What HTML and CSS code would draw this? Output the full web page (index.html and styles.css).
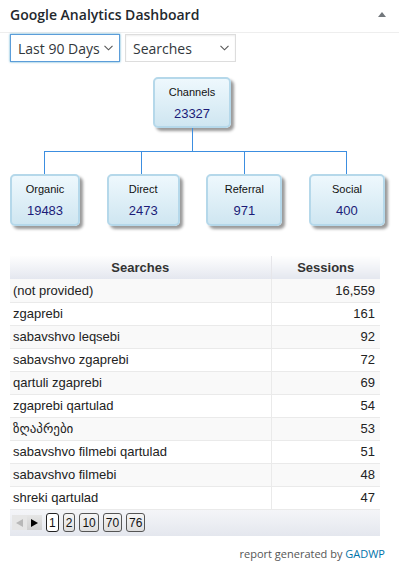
FILE: index.html
```html
<!DOCTYPE html>
<html lang="en">
<head>
<meta charset="UTF-8" />
<title>Google Analytics Dashboard</title>
<link rel="stylesheet" href="styles.css">
</head>
<body>
<div class="widget">
<div class="widget-head">
<h2>Google Analytics Dashboard</h2>
<span class="toggle"></span>
</div>

<div class="controls">
<div class="select select-focus">
<span>Last 90 Days</span>
<svg width="9" height="6" viewBox="0 0 9 6"><path d="M0.5 0.8 L4.5 4.8 L8.5 0.8" fill="none" stroke="#555" stroke-width="1.1"/></svg>
</div>
<div class="select select-wide">
<span>Searches</span>
<svg width="9" height="6" viewBox="0 0 9 6"><path d="M0.5 0.8 L4.5 4.8 L8.5 0.8" fill="none" stroke="#555" stroke-width="1.1"/></svg>
</div>
</div>

<div class="orgchart">
<div class="org-top">
<div class="org-node node-parent">
<span class="node-label">Channels</span>
<span class="node-value">23327</span>
</div>
</div>
<svg class="org-lines" width="375" height="46" viewBox="0 0 375 46">
<g stroke="#3c8ee0" stroke-width="1" fill="none">
<path d="M182.5 0 V23.5"/>
<path d="M34 23.5 H337"/>
<path d="M34.5 23 V46"/>
<path d="M131.5 23 V46"/>
<path d="M234.5 23 V46"/>
<path d="M336.5 23 V46"/>
</g>
</svg>
<div class="org-children">
<div class="org-node">
<span class="node-label">Organic</span>
<span class="node-value">19483</span>
</div>
<div class="org-node">
<span class="node-label">Direct</span>
<span class="node-value">2473</span>
</div>
<div class="org-node">
<span class="node-label">Referral</span>
<span class="node-value">971</span>
</div>
<div class="org-node">
<span class="node-label">Social</span>
<span class="node-value">400</span>
</div>
</div>
</div>

<div class="gtable">
<table>
<thead>
<tr><th class="col-name">Searches</th><th class="col-num">Sessions</th></tr>
</thead>
<tbody>
<tr class="odd"><td>(not provided)</td><td class="num">16,559</td></tr>
<tr><td>zgaprebi</td><td class="num">161</td></tr>
<tr class="odd"><td>sabavshvo leqsebi</td><td class="num">92</td></tr>
<tr><td>sabavshvo zgaprebi</td><td class="num">72</td></tr>
<tr class="odd"><td>qartuli zgaprebi</td><td class="num">69</td></tr>
<tr><td>zgaprebi qartulad</td><td class="num">54</td></tr>
<tr class="odd"><td>ზღაპრები</td><td class="num">53</td></tr>
<tr><td>sabavshvo filmebi qartulad</td><td class="num">51</td></tr>
<tr class="odd"><td>sabavshvo filmebi</td><td class="num">48</td></tr>
<tr><td>shreki qartulad</td><td class="num">47</td></tr>
</tbody>
</table>
<div class="pager">
<span class="pg-arrow disabled"><svg width="7" height="8" viewBox="0 0 7 8"><path d="M7 0 V8 L0 4 Z" fill="#b8b8b8"/></svg></span>
<span class="pg-arrow"><svg width="7" height="8" viewBox="0 0 7 8"><path d="M0 0 V8 L7 4 Z" fill="#000"/></svg></span>
<span class="pg-btn current">1</span>
<span class="pg-btn">2</span>
<span class="pg-btn">10</span>
<span class="pg-btn">70</span>
<span class="pg-btn">76</span>
</div>
</div>

<div class="footer">report generated by <a href="#">GADWP</a></div>
</div>
</body>
</html>
```

FILE: styles.css
```css
* {
box-sizing: border-box;
margin: 0;
padding: 0;
}

body {
width: 399px;
height: 563px;
background: #fff;
font-family: 'Open Sans', sans-serif;
color: #32373c;
}

.widget-head {
display: flex;
align-items: center;
justify-content: space-between;
height: 33px;
padding: 0 13px 3px 10px;
border-bottom: 1px solid #eee;
}

.widget-head h2 {
font-size: 14px;
font-weight: 600;
color: #23282d;
}

.toggle {
width: 0;
height: 0;
border-left: 4px solid transparent;
border-right: 4px solid transparent;
border-bottom: 5px solid #72777c;
}

.controls {
display: flex;
gap: 5px;
padding: 1px 10px 0;
}

.select {
display: flex;
align-items: center;
justify-content: space-between;
width: 110px;
height: 28px;
padding: 0 6px 0 7px;
border: 1px solid #ddd;
background: #fff;
font-size: 14px;
color: #32373c;
box-shadow: inset 0 1px 2px rgba(0,0,0,0.07);
}

.select-focus {
border-color: #5b9dd9;
box-shadow: 0 0 2px rgba(30,140,190,0.8);
}

.select-wide {
width: 111px;
}

.orgchart {
padding: 15px 0 0 10px;
width: 385px;
}

.org-top {
padding-left: 143px;
}

.org-lines {
display: block;
}

.org-node {
display: flex;
flex-direction: column;
align-items: center;
width: 78px;
height: 51px;
padding-top: 6px;
border: 2px solid #b5d8ea;
border-radius: 5px;
background: linear-gradient(#eef8fd, #cfe6f1);
box-shadow: 3px 3px 3px rgba(0,0,0,0.4);
font-family: 'Liberation Sans', Arial, sans-serif;
}

.org-children {
display: grid;
grid-template-columns: 70px 73px 76px 76px;
justify-content: space-between;
}

.org-children .org-node {
width: auto;
height: 52px;
}

.node-label {
font-size: 11px;
color: #111;
line-height: 14px;
}

.node-value {
margin-top: 7px;
font-size: 13px;
color: #1b1b78;
line-height: 15px;
}

.gtable {
margin: 30px 0 0 10px;
width: 370px;
font-family: 'Liberation Sans', Arial, 'DejaVu Sans', sans-serif;
font-size: 13px;
color: #222;
}

.gtable table {
width: 100%;
border-collapse: collapse;
}

.gtable th {
height: 23px;
font-weight: bold;
color: #333;
background: linear-gradient(#fefefe, #e4e7ef);
border-right: 1px solid #e6e6ea;
}

.gtable th:last-child {
border-right: none;
}

.col-name {
width: 261px;
}

.gtable td {
height: 23px;
padding: 0 5px 0 3px;
border-bottom: 1px solid #eaeaea;
border-right: 1px solid #eaeaea;
background: #fff;
}

.gtable td:last-child {
border-right: none;
}

.gtable tr.odd td {
background: #f9f9f9;
}

.gtable td.num {
text-align: right;
}

.pager {
display: flex;
align-items: center;
height: 26px;
padding: 0 0 0 2px;
background: linear-gradient(#f4f5f8, #e4e7ee);
}

.pg-arrow {
display: flex;
align-items: center;
justify-content: center;
width: 15px;
height: 15px;
background: linear-gradient(#e6e6e6, #d0d0d0);
}

.pg-arrow.disabled {
background: #e6e6e6;
}

.pg-btn {
display: flex;
align-items: center;
justify-content: center;
min-width: 12px;
height: 19px;
padding: 0 2px;
margin-left: 4px;
border: 1px solid #555;
border-radius: 3px;
background: linear-gradient(#f6f6f6, #dedede);
font-size: 12px;
color: #111;
}

.pg-btn.current {
background: #fff;
border-color: #222;
margin-left: 4px;
}

.footer {
margin-top: 10px;
padding-right: 14px;
text-align: right;
font-size: 11px;
color: #555;
}

.footer a {
color: #0073aa;
text-decoration: none;
}
```
